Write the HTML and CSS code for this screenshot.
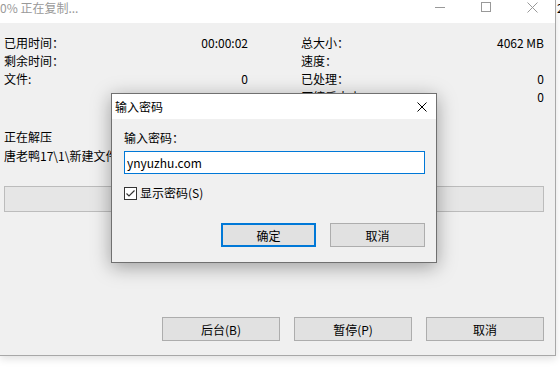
FILE: index.html
```html
<!DOCTYPE html>
<html lang="zh-CN">
<head>
    <meta charset="UTF-8">
    <title>正在复制</title>
    <link rel="stylesheet" href="styles.css">
</head>
<body>
    <div class="screen">
        <div class="window">
            <div class="titlebar">
                <span class="title">0% 正在复制...</span>
                <div class="caption">
                    <span class="cap-btn">
                        <svg width="10" height="10" viewBox="0 0 10 10"><path d="M0 5.5H10" stroke="#999" stroke-width="1"/></svg>
                    </span>
                    <span class="cap-btn">
                        <svg width="10" height="10" viewBox="0 0 10 10"><rect x="0.5" y="0.5" width="9" height="9" fill="none" stroke="#999"/></svg>
                    </span>
                    <span class="cap-btn">
                        <svg width="11" height="11" viewBox="0 0 11 11"><path d="M0.5 0.5L10.5 10.5M10.5 0.5L0.5 10.5" stroke="#999" stroke-width="1"/></svg>
                    </span>
                </div>
            </div>

            <div class="content">
                <div class="stats">
                    <div class="stat-col">
                        <div class="stat"><span>已用时间：</span><span>00:00:02</span></div>
                        <div class="stat"><span>剩余时间：</span><span></span></div>
                        <div class="stat"><span>文件:</span><span>0</span></div>
                    </div>
                    <div class="stat-col">
                        <div class="stat"><span>总大小：</span><span>4062 MB</span></div>
                        <div class="stat"><span>速度：</span><span></span></div>
                        <div class="stat"><span>已处理：</span><span>0</span></div>
                        <div class="stat"><span>压缩后大小：</span><span>0</span></div>
                    </div>
                </div>

                <div class="current">
                    <div>正在解压</div>
                    <div>唐老鸭17\1\新建文件夹\1.mp4</div>
                </div>

                <div class="progress"></div>

                <div class="actions">
                    <button class="btn">后台(B)</button>
                    <button class="btn">暂停(P)</button>
                    <button class="btn">取消</button>
                </div>
            </div>
        </div>
        <div class="behind">2</div>
    </div>

    <div class="dialog">
        <div class="dialog-title">
            <span>输入密码</span>
            <svg width="10" height="10" viewBox="0 0 10 10"><path d="M0.5 0.5L9.5 9.5M9.5 0.5L0.5 9.5" stroke="#000" stroke-width="1"/></svg>
        </div>
        <div class="dialog-body">
            <div class="field-label">输入密码：</div>
            <input class="field" type="text" value="ynyuzhu.com">
            <label class="check">
                <svg width="13" height="13" viewBox="0 0 13 13">
                    <rect x="0.5" y="0.5" width="12" height="12" fill="#fff" stroke="#333"/>
                    <path d="M2.5 6.5L5 9L10.5 3.5" fill="none" stroke="#333" stroke-width="1.2"/>
                </svg>
                <span>显示密码(S)</span>
            </label>
            <div class="dialog-actions">
                <button class="btn btn-small btn-default">确定</button>
                <button class="btn btn-small">取消</button>
            </div>
        </div>
    </div>
</body>
</html>
```

FILE: styles.css
```css
* {
    box-sizing: border-box;
}

body {
    margin: 0;
    width: 560px;
    height: 371px;
    overflow: hidden;
    position: relative;
    background-color: #fff;
    font-family: "Noto Sans CJK SC", "Noto Sans", sans-serif;
    font-size: 12px;
    color: #000;
}

.screen {
    display: flex;
    height: 371px;
}

.window {
    width: 556px;
    height: 356px;
    display: flex;
    flex-direction: column;
    background-color: #f0f0f0;
    border-right: 1px solid #a8a8a8;
    border-bottom: 1px solid #a8a8a8;
    box-shadow: 0 3px 8px rgba(0, 0, 0, 0.12);
}

.titlebar {
    height: 23px;
    background-color: #fff;
    display: flex;
    justify-content: space-between;
}

.title {
    color: #999;
    line-height: 16px;
}

.caption {
    display: flex;
}

.cap-btn {
    width: 46px;
    height: 23px;
    display: flex;
    justify-content: center;
    padding-top: 2px;
}

.content {
    flex: 1;
    display: flex;
    flex-direction: column;
    padding: 11px 11px 14px 4px;
}

.stats {
    display: grid;
    grid-template-columns: 244px 1fr;
    column-gap: 53px;
}

.stat {
    display: flex;
    justify-content: space-between;
    height: 18px;
    line-height: 18px;
}

.current {
    margin-top: 21px;
    line-height: 19px;
}

.progress {
    margin-top: 21px;
    height: 26px;
    background-color: #e6e6e6;
    border: 1px solid #bcbcbc;
}

.actions {
    margin-top: auto;
    display: flex;
    justify-content: flex-end;
    gap: 14px;
}

.btn {
    width: 118px;
    height: 24px;
    padding: 0;
    background-color: #e1e1e1;
    border: 1px solid #adadad;
    font: inherit;
    color: #000;
}

.behind {
    flex: 1;
    overflow: hidden;
    line-height: 16px;
    padding-left: 1px;
}

/* password prompt floating above the progress window */
.dialog {
    position: absolute;
    left: 111px;
    top: 93px;
    width: 326px;
    height: 170px;
    background-color: #f0f0f0;
    border: 1px solid #707070;
    box-shadow: 0 4px 18px rgba(0, 0, 0, 0.35);
}

.dialog-title {
    height: 25px;
    background-color: #fff;
    display: flex;
    justify-content: space-between;
    align-items: center;
    padding: 0 9px 0 3px;
}

.dialog-body {
    padding: 10px 11px 0 12px;
}

.field-label {
    line-height: 18px;
}

.field {
    display: block;
    width: 100%;
    height: 23px;
    margin-top: 4px;
    padding: 0 2px;
    border: 1px solid #0078d7;
    background-color: #fff;
    font: inherit;
    color: #000;
    outline: none;
}

.check {
    display: flex;
    align-items: center;
    gap: 3px;
    margin-top: 10px;
    line-height: 18px;
}

.dialog-actions {
    display: flex;
    justify-content: flex-end;
    gap: 14px;
    margin-top: 21px;
}

.btn-small {
    width: 95px;
}

.btn-default {
    border: 2px solid #0078d7;
}
```
